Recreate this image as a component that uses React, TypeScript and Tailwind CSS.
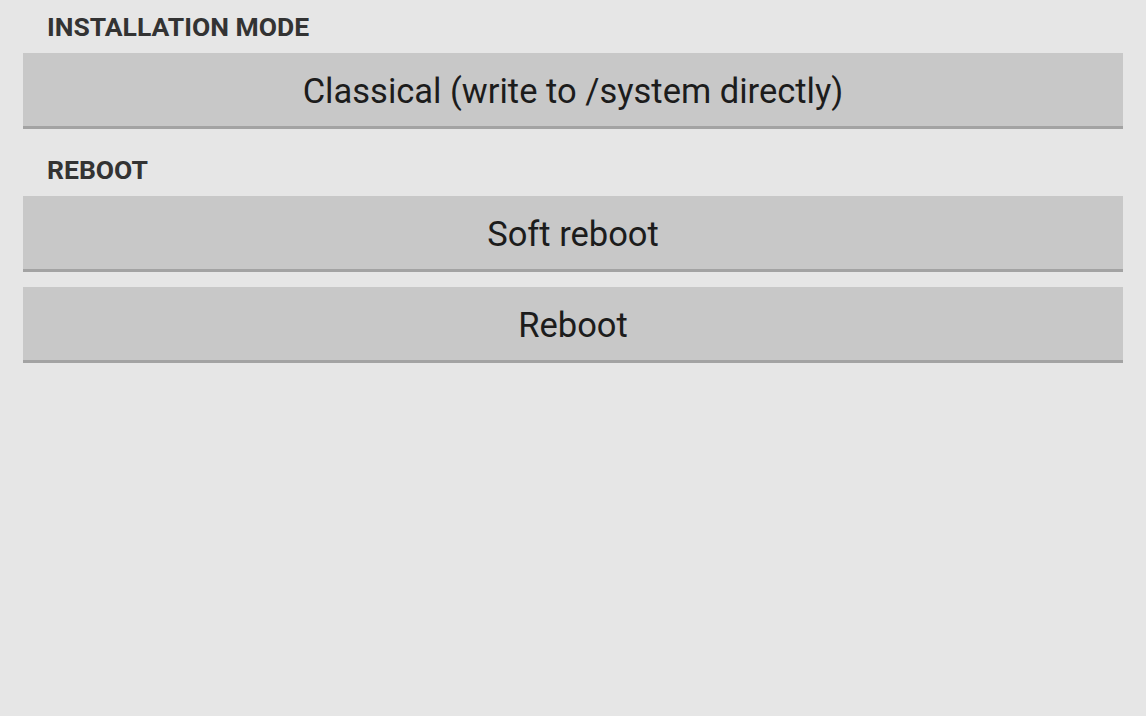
import React from 'react';

const Section: React.FC<{ title: string; children: React.ReactNode }> = ({ title, children }) => (
  <div className="flex flex-col">
    <h3 className="pl-[47px] pt-[12px] pb-[11px] text-[26.5px] leading-[30px] font-bold text-[#333]">{title}</h3>
    <div className="flex flex-col gap-[15px]">{children}</div>
  </div>
);

const OptionButton: React.FC<{ label: string }> = ({ label }) => (
  <button className="mx-[23px] h-[76px] bg-[#c8c8c8] border-b-[3px] border-[#a3a3a3] text-[34.5px] text-[#1c1c1c] flex items-center justify-center pt-[5px]">
    {label}
  </button>
);

export default function App() {
  return (
    <div
      className="w-[1146px] h-[716px] bg-[#e6e6e6] flex flex-col gap-[14px]"
      style={{ fontFamily: 'Roboto, "Noto Sans", sans-serif' }}
    >
      <Section title="INSTALLATION MODE">
        <OptionButton label="Classical (write to /system directly)" />
      </Section>
      <Section title="REBOOT">
        <OptionButton label="Soft reboot" />
        <OptionButton label="Reboot" />
      </Section>
    </div>
  );
}
